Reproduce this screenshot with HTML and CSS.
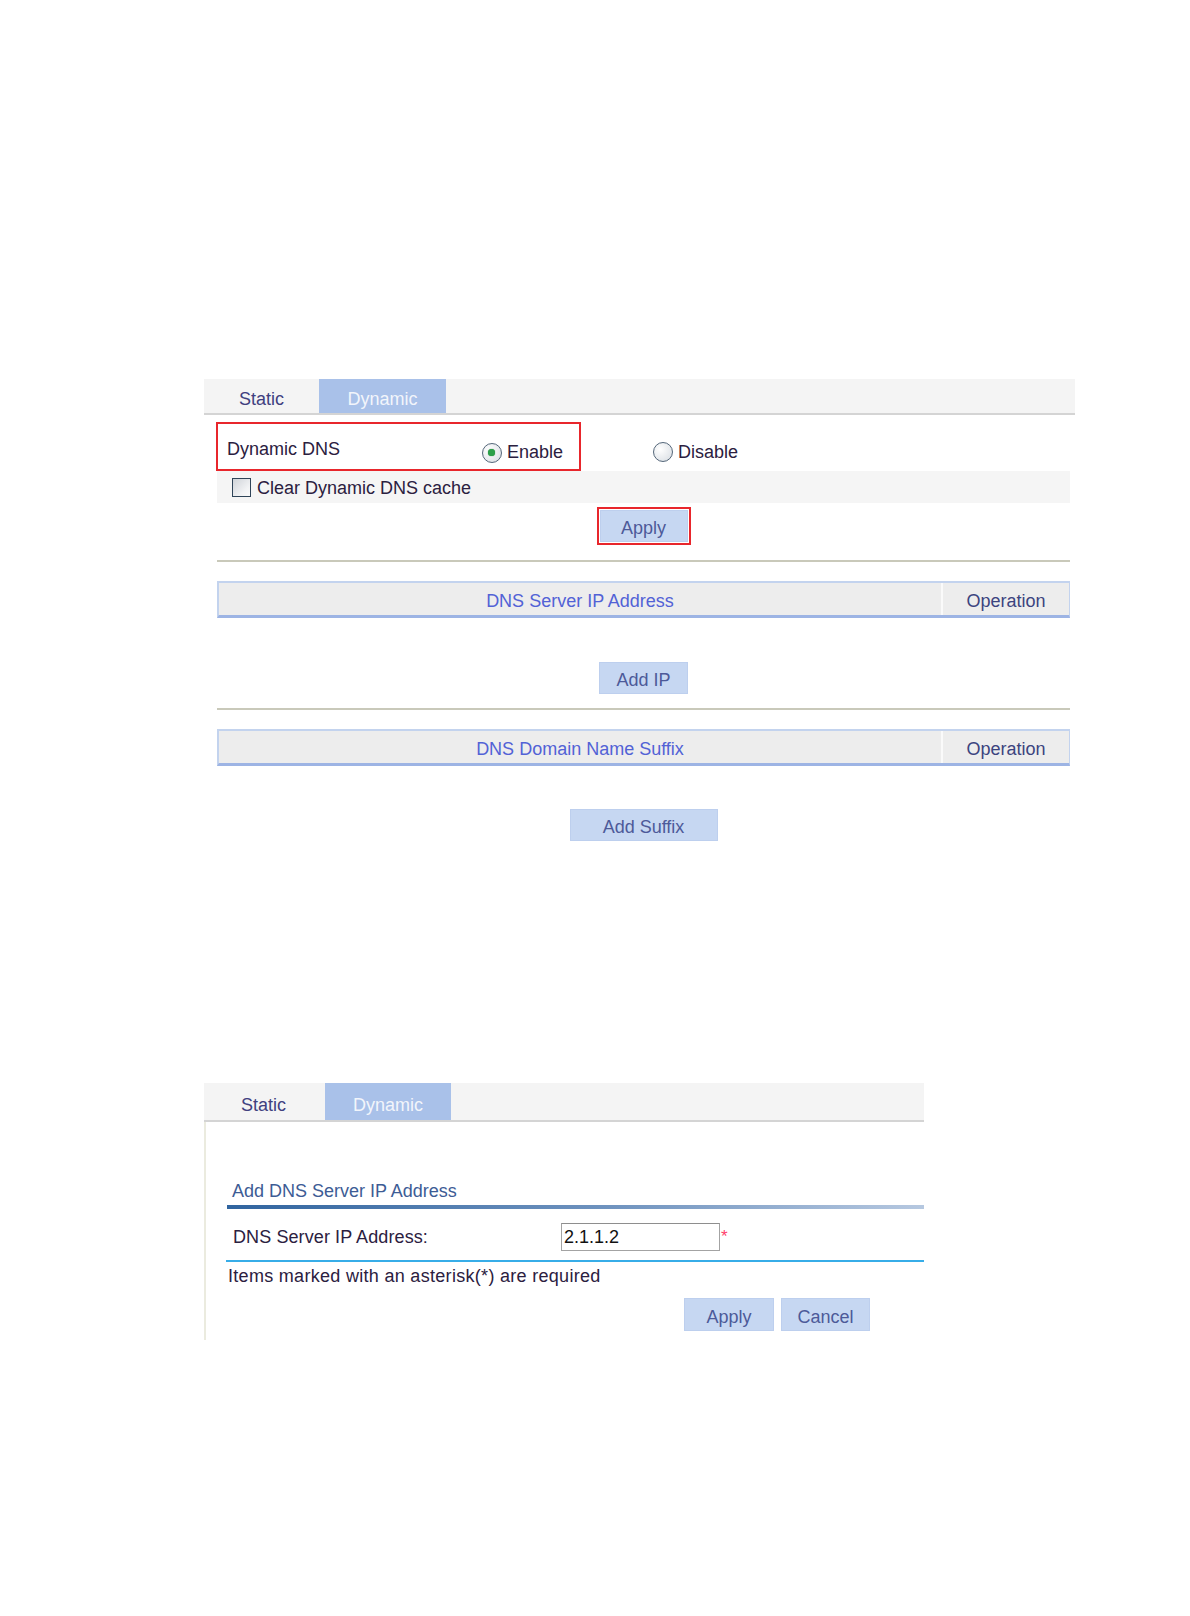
FILE: index.html
```html
<!DOCTYPE html>
<html>
<head>
<meta charset="utf-8">
<title>DNS</title>
<link rel="stylesheet" href="styles.css">
</head>
<body>
<div class="page">
  <section class="panel panel-one">
    <div class="tabs">
      <div class="tab tab-static">Static</div>
      <div class="tab tab-dynamic">Dynamic</div>
    </div>
    <div class="content">
      <div class="row-dns">
        <div class="redbox">
          <span class="label-dns">Dynamic DNS</span>
          <span class="choice"><span class="radio checked"></span>Enable</span>
        </div>
        <span class="choice choice-disable"><span class="radio"></span>Disable</span>
      </div>
      <div class="row-cache">
        <span class="checkbox"></span><span class="cache-text">Clear Dynamic DNS cache</span>
      </div>
      <div class="center">
        <div class="redframe"><div class="btn btn-apply1">Apply</div></div>
      </div>
      <div class="sep sep-first"></div>
      <div class="thead">
        <div class="th th-main">DNS Server IP Address</div>
        <div class="th th-op">Operation</div>
      </div>
      <div class="center gap-btn"><div class="btn btn-addip">Add IP</div></div>
      <div class="sep sep-second"></div>
      <div class="thead">
        <div class="th th-main">DNS Domain Name Suffix</div>
        <div class="th th-op">Operation</div>
      </div>
      <div class="center gap-btn2"><div class="btn btn-suffix">Add Suffix</div></div>
    </div>
  </section>

  <section class="panel panel-two">
    <div class="tabs tabs-two">
      <div class="tab tab-static tab-static2">Static</div>
      <div class="tab tab-dynamic tab-dynamic2">Dynamic</div>
    </div>
    <div class="body-two">
      <div class="form-title">Add DNS Server IP Address</div>
      <div class="grad-line"></div>
      <div class="field-row">
        <span class="field-label">DNS Server IP Address:</span>
        <span class="input">2.1.1.2</span>
        <span class="star">*</span>
      </div>
      <div class="cyan-line"></div>
      <div class="note">Items marked with an asterisk(*) are required</div>
      <div class="btn-row">
        <div class="btn btn-apply2">Apply</div>
        <div class="btn btn-cancel">Cancel</div>
      </div>
    </div>
  </section>
</div>
</body>
</html>
```

FILE: styles.css
```css
* { box-sizing: border-box; }
html, body { margin: 0; padding: 0; background: #ffffff; }
body {
  font-family: "Liberation Sans", Arial, sans-serif;
  font-size: 18px;
  color: #2b2040;
}
.page { padding: 379px 0 0 204px; }

.panel-one { width: 871px; }
.panel-two { width: 720px; margin-top: 242px; }

.tabs {
  display: flex;
  height: 36px;
  background: #f4f4f4;
  border-bottom: 2px solid #d4d4d4;
}
.tabs-two { height: 39px; }
.tab {
  display: flex;
  align-items: center;
  justify-content: center;
  padding-top: 6px;
  height: 34px;
}
.tabs-two .tab { height: 37px; padding-top: 7px; }
.tab-static { width: 115px; color: #40407f; }
.tab-dynamic { width: 127px; background: #a9c1e9; color: #f2f5fb; }
.tab-static2 { width: 119px; }
.tab-dynamic2 { width: 126px; margin-left: 2px; }

.content { width: 853px; margin-left: 13px; }

.row-dns {
  display: flex;
  align-items: center;
  margin-top: 7px;
}
.redbox {
  display: flex;
  align-items: center;
  width: 365px;
  height: 49px;
  margin-left: -1px;
  border: 2px solid #e8262c;
  padding: 5px 0 0 9px;
}
.label-dns { width: 255px; }
.choice { display: flex; align-items: center; margin-top: 7px; }
.choice-disable { margin-left: 72px; margin-top: 11px; }
.radio {
  width: 20px;
  height: 20px;
  border-radius: 50%;
  border: 1.5px solid #55677a;
  background: radial-gradient(circle at 35% 35%, #ffffff 0%, #e2e6ea 70%, #c9ced4 100%);
  margin-right: 5px;
  position: relative;
}
.radio.checked::after {
  content: "";
  position: absolute;
  left: 5px;
  top: 5px;
  width: 7px;
  height: 7px;
  border-radius: 50%;
  background: #2aa048;
  box-shadow: 0 0 1px #1a7a30;
}

.row-cache {
  display: flex;
  align-items: center;
  height: 32px;
  background: #f5f5f5;
  padding-left: 15px;
}
.checkbox {
  width: 19px;
  height: 19px;
  border: 1.5px solid #2f4458;
  background: linear-gradient(135deg, #cfd3d8 0%, #f2f3f5 70%, #fafafa 100%);
  margin-right: 6px;
}
.cache-text { padding-top: 2px; }

.center { display: flex; justify-content: center; }
.redframe {
  margin-top: 4px;
  border: 2px solid #e8262c;
  padding: 1px;
  background: #fff;
}
.btn {
  display: flex;
  align-items: center;
  justify-content: center;
  height: 32px;
  background: #c6d7f2;
  border: 1px solid #bdcfee;
  color: #4d5a99;
  padding-top: 5px;
}
.btn-apply1 { width: 88px; }
.btn-addip { width: 89px; }
.btn-suffix { width: 148px; }

.sep { height: 2px; background: #c9c9ba; }
.sep-first { margin-top: 15px; }
.sep-second { margin-top: 14px; }

.thead {
  display: grid;
  grid-template-columns: 1fr 128px;
  height: 37px;
  margin-top: 19px;
  background: #ededed;
  border-top: 2px solid #c3d3ee;
  border-left: 2px solid #c3d3ee;
  border-right: 1px solid #c3d3ee;
  border-bottom: 3px solid #9db4e4;
}
.th {
  display: flex;
  align-items: center;
  justify-content: center;
  padding-top: 5px;
}
.th-main { color: #5262d6; }
.th-op { color: #3c447f; border-left: 2px solid #fafafa; }

.gap-btn { margin-top: 44px; }
.gap-btn2 { margin-top: 43px; }

.body-two {
  border-left: 2px solid #ebebdf;
  padding: 58px 0 9px 20px;
}
.form-title {
  line-height: 22px;
  height: 22px;
  color: #3d5c95;
  padding-left: 6px;
}
.grad-line {
  margin-top: 3px;
  height: 4px;
  margin-left: 1px;
  background: linear-gradient(to right, #30649f 0%, #6f93bf 55%, #b6c8e0 100%);
}
.field-row {
  display: flex;
  align-items: center;
  height: 28px;
  margin-top: 14px;
  padding-left: 7px;
}
.field-label { width: 328px; letter-spacing: 0.1px; }
.input {
  display: flex;
  align-items: center;
  width: 159px;
  height: 28px;
  border: 1px solid #a3a3a3;
  border-top-color: #8e8e8e;
  padding-left: 2px;
  color: #111;
  background: #fff;
}
.star {
  color: #ff3f6c;
  font-size: 17px;
  align-self: flex-start;
  margin-top: 4px;
  margin-left: 1px;
}
.cyan-line {
  margin-top: 9px;
  height: 2px;
  background: #37ade8;
}
.note {
  margin-top: 3px;
  line-height: 22px;
  padding-left: 2px;
  letter-spacing: 0.3px;
  color: #2b2040;
}
.btn-row {
  display: flex;
  gap: 7px;
  margin-top: 11px;
  padding-left: 458px;
}
.btn-apply2 { width: 90px; height: 33px; padding-top: 6px; }
.btn-cancel { width: 89px; height: 33px; padding-top: 6px; }
```
